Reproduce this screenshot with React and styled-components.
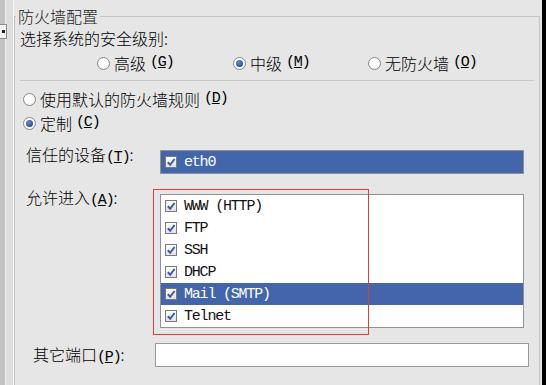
import React from "react";
import styled, { createGlobalStyle, css } from "styled-components";

const GlobalStyle = createGlobalStyle`
  html, body {
    margin: 0;
    padding: 0;
    background: #e6e6e6;
  }
  body {
    width: 546px;
    height: 385px;
    overflow: hidden;
    font-family: "Noto Sans CJK SC", "Noto Sans", sans-serif;
    font-weight: 300;
    color: #000;
  }
`;

const Page = styled.div`
  display: flex;
  width: 546px;
  height: 385px;
  overflow: hidden;
  background: #e6e6e6;
`;

const Rail = styled.div`
  flex: none;
  width: 14px;
  display: flex;
  flex-direction: column;
  background: linear-gradient(
    to right,
    #c3c3c3 0 5px,
    #f0f0f0 5px 6px,
    #dedede 6px 13px,
    #f8f8f8 13px 14px
  );
`;

const RailTab = styled.div`
  margin-top: 24px;
  width: 7px;
  height: 15px;
  box-sizing: border-box;
  border: 1px solid #8c8c8c;
  border-left: none;
  background: #f2f2f2;
  display: flex;
  align-items: center;
  justify-content: center;

  &::after {
    content: "";
    width: 3px;
    height: 3px;
    background: #222;
  }
`;

const BlackEdge = styled.div`
  flex: none;
  width: 4px;
  margin-left: 2px;
  background: #000;
`;

const Frame = styled.fieldset`
  flex: 1;
  min-width: 0;
  margin: 6px 0 0 0;
  padding: 0;
  height: 420px;
  border: 1px solid #c4c4c4;
  border-bottom: none;
  box-sizing: border-box;
`;

const Legend = styled.legend`
  padding: 0 2px;
  margin-left: 1px;
  font-size: 16px;
  line-height: 20px;
  color: #1c1c1c;
`;

const text = css`
  font-size: 16px;
  line-height: 22px;
  white-space: nowrap;
`;

const Prompt = styled.div`
  ${text}
  margin-top: 1px;
  padding-left: 5px;
`;

const Mono = styled.span`
  font-family: "Liberation Mono", monospace;
  font-weight: 400;
  font-size: 15px;
  letter-spacing: -1.2px;
`;

const LevelRow = styled.div`
  display: grid;
  grid-template-columns: 136px 135px 1fr;
  margin-top: 3px;
  padding-left: 82px;
`;

const Option = styled.label`
  ${text}
  display: flex;
  align-items: center;
  gap: 4px;
  padding-left: ${(p) => p.$indent || 0}px;
  margin-top: ${(p) => p.$gap || 0}px;
`;

const Radio = styled.span`
  flex: none;
  width: 13px;
  height: 13px;
  box-sizing: border-box;
  border-radius: 50%;
  border: 1px solid #8a8a8a;
  background: radial-gradient(circle at 40% 35%, #ffffff 0 40%, #e4e4e4 100%);
  display: flex;
  align-items: center;
  justify-content: center;

  &::after {
    content: "";
    display: ${(p) => (p.$on ? "block" : "none")};
    width: 7px;
    height: 7px;
    border-radius: 50%;
    background: radial-gradient(circle at 40% 35%, #6d8bd0 0, #2c4c96 70%);
  }
`;

const Separator = styled.hr`
  margin: 6px 5px 0 5px;
  border: none;
  border-top: 1px solid #c8c8c8;
  height: 0;
`;

const FieldRow = styled.div`
  display: grid;
  grid-template-columns: ${(p) => p.$label}px 1fr;
  align-items: start;
  margin-top: ${(p) => p.$gap}px;
  padding-left: ${(p) => p.$indent}px;
  padding-right: ${(p) => p.$right}px;
`;

const FieldLabel = styled.div`
  ${text}
`;

const Box = styled.div`
  ${(p) => p.$offset && `margin-top: ${p.$offset}px;`}
  position: relative;
  box-sizing: border-box;
  border: 1px solid #929292;
`;

const DeviceBox = styled(Box)`
  height: 24px;
  background: #5b79b4;
`;

const ListBox = styled(Box)`
  height: 134px;
  background: #fff;
`;

const PortInput = styled.div`
  height: 24px;
  box-sizing: border-box;
  border: 1px solid #9a9a9a;
  background: #fff;
`;

const Item = styled.div`
  display: flex;
  align-items: center;
  gap: 7px;
  height: 22px;
  padding-left: 4px;
  background: ${(p) => (p.$selected ? "#4366ab" : "transparent")};
  color: ${(p) => (p.$selected ? "#fff" : "#111")};
  font-family: "Liberation Mono", monospace;
  font-weight: 400;
  font-size: 15px;
  letter-spacing: -1.2px;
  white-space: pre;
`;

const Check = styled.span`
  flex: none;
  width: 12px;
  height: 12px;
  box-sizing: border-box;
  border: 1px solid #7a7a7a;
  background: linear-gradient(#ffffff, #e2e2e2);
  display: flex;
  align-items: center;
  justify-content: center;
`;

const Annotation = styled.div`
  position: absolute;
  left: -8px;
  top: -6px;
  width: 216px;
  height: 146px;
  box-sizing: border-box;
  border: 1px solid #e43a3a;
  pointer-events: none;
`;

const Tick = () => (
  <svg width="10" height="10" viewBox="0 0 10 10">
    <path d="M1.8 5.2 L4.2 7.8 L8.6 2" fill="none" stroke="#3a5cab" strokeWidth="2" />
  </svg>
);

const Key = ({ k }) => (
  <Mono>
    (<u>{k}</u>)
  </Mono>
);

const services = ["WWW (HTTP)", "FTP", "SSH", "DHCP", "Mail (SMTP)", "Telnet"];

const App = () => {
  return (
    <Page>
      <GlobalStyle />
      <Rail>
        <RailTab />
      </Rail>
      <Frame>
        <Legend>防火墙配置</Legend>
        <Prompt>选择系统的安全级别:</Prompt>
        <LevelRow>
          <Option>
            <Radio />
            高级<Key k="G" />
          </Option>
          <Option>
            <Radio $on />
            中级<Key k="M" />
          </Option>
          <Option>
            <Radio />
            无防火墙<Key k="O" />
          </Option>
        </LevelRow>
        <Separator />
        <Option $indent={8} $gap={7}>
          <Radio />
          使用默认的防火墙规则<Key k="D" />
        </Option>
        <Option $indent={8} $gap={2}>
          <Radio $on />
          定制<Key k="C" />
        </Option>

        <FieldRow $label={134} $indent={11} $right={15} $gap={9}>
          <FieldLabel>
            信任的设备<Key k="T" />:
          </FieldLabel>
          <DeviceBox $offset={7}>
            <Item $selected>
              <Check>
                <Tick />
              </Check>
              eth0
            </Item>
          </DeviceBox>
        </FieldRow>

        <FieldRow $label={134} $indent={11} $right={15} $gap={12}>
          <FieldLabel>
            允许进入<Key k="A" />:
          </FieldLabel>
          <ListBox $offset={8}>
            {services.map((s) => (
              <Item key={s} $selected={s === "Mail (SMTP)"}>
                <Check>
                  <Tick />
                </Check>
                {s}
              </Item>
            ))}
            <Annotation />
          </ListBox>
        </FieldRow>

        <FieldRow $label={122} $indent={18} $right={10} $gap={15}>
          <FieldLabel>
            其它端口<Key k="P" />:
          </FieldLabel>
          <PortInput />
        </FieldRow>
      </Frame>
      <BlackEdge />
    </Page>
  );
};

export default App;
